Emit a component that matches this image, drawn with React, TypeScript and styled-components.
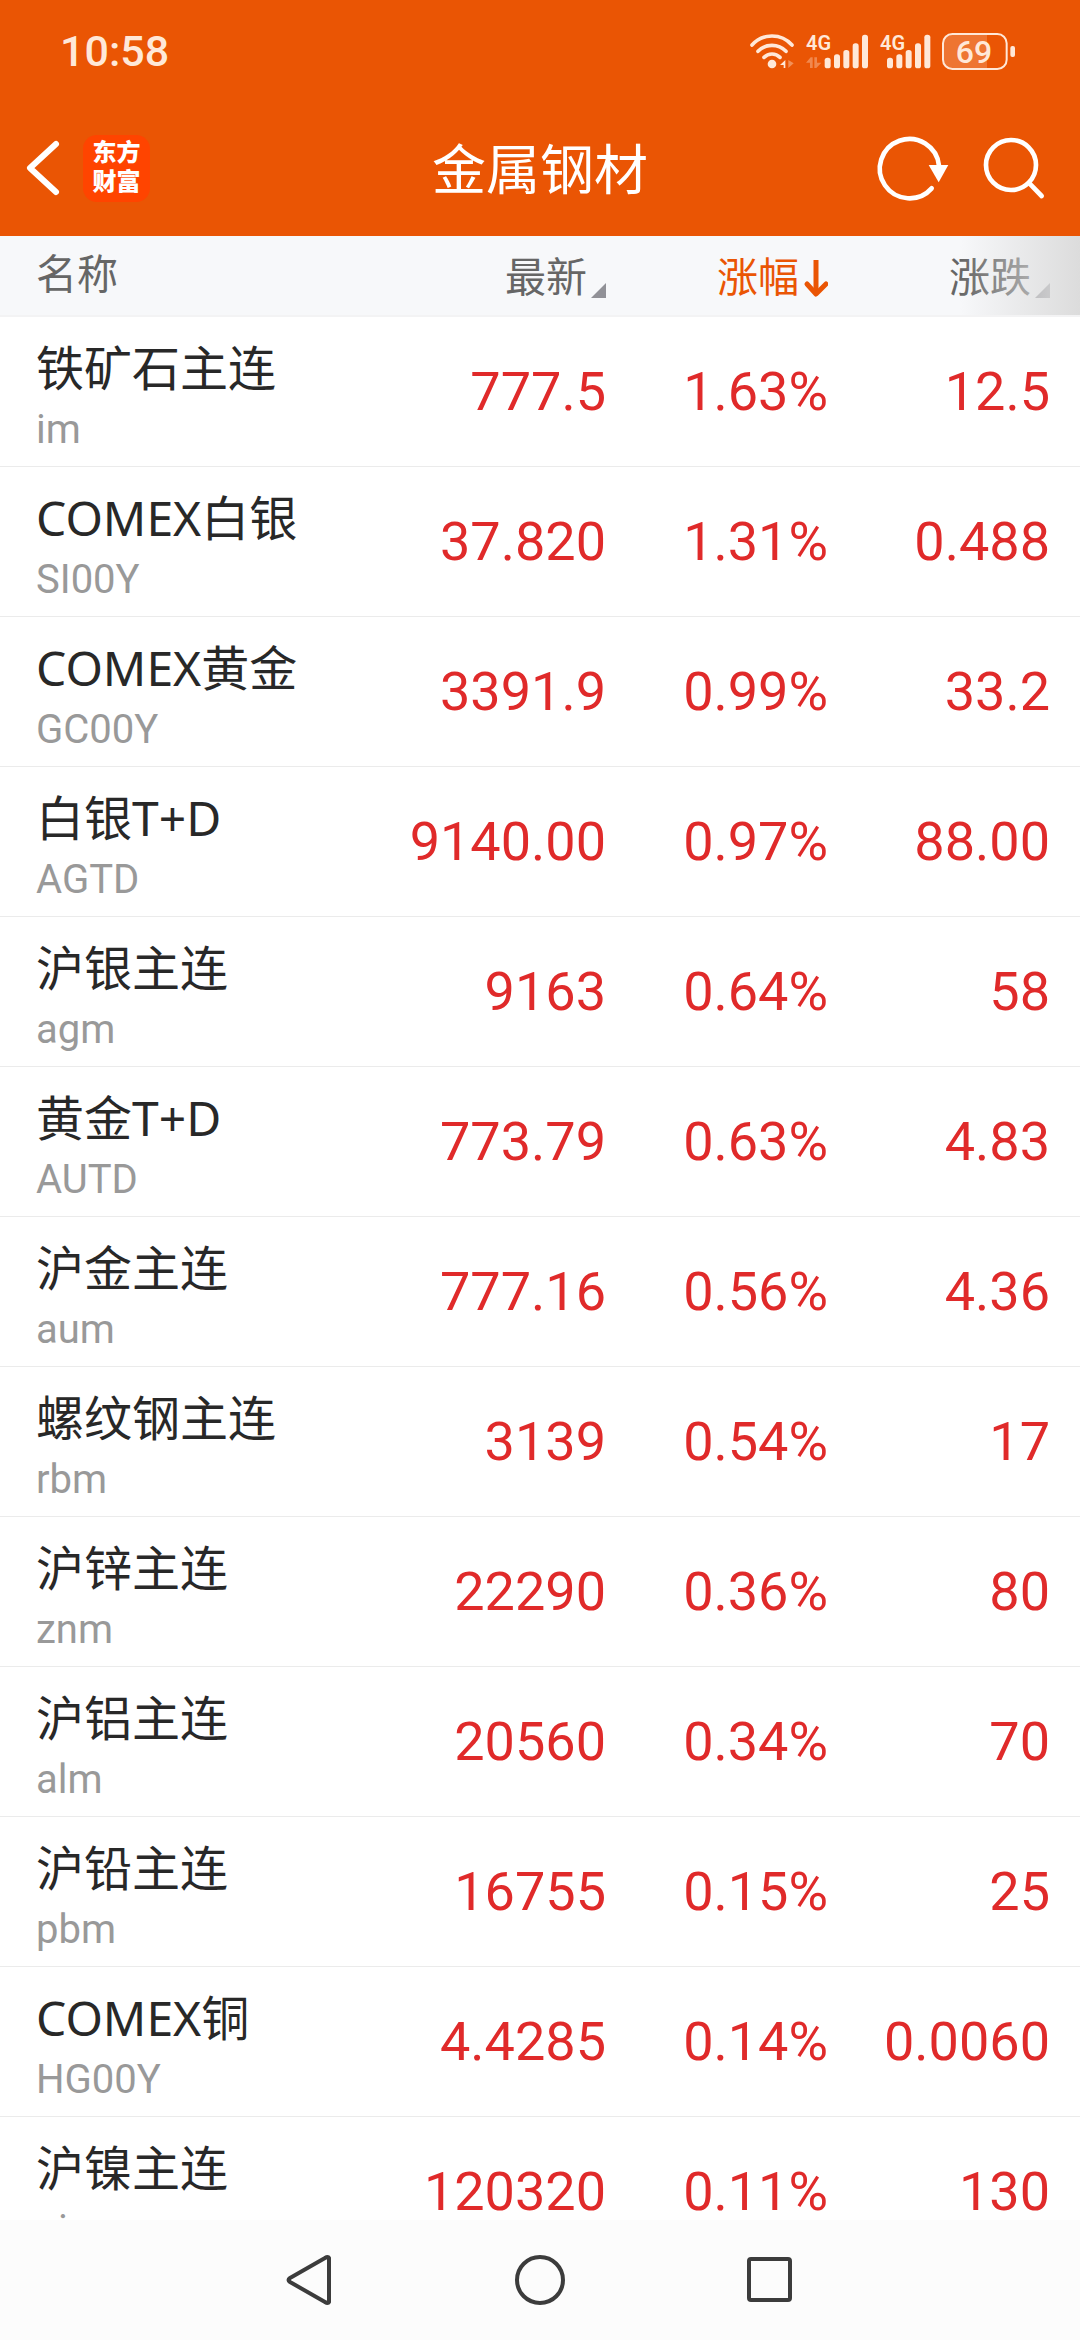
import React from "react";
import styled, { createGlobalStyle } from "styled-components";

const colors = {
  brand: "#ea5504",
  status: "#ffe8d8",
  rise: "#e02a2a",
  name: "#282828",
  code: "#999999",
  label: "#666666",
};

const GlobalStyle = createGlobalStyle`
  *, *::before, *::after { box-sizing: border-box; }
  body {
    margin: 0;
    background: #ffffff;
    font-family: Roboto, "Noto Sans CJK SC", sans-serif;
  }
  button {
    margin: 0;
    padding: 0;
    border: 0;
    background: none;
    color: inherit;
    font: inherit;
    cursor: pointer;
  }
  svg { display: block; overflow: visible; }
`;

const Screen = styled.div`
  display: flex;
  flex-direction: column;
  height: 100vh;
  overflow: hidden;
`;

const Header = styled.header`
  flex: none;
  background: ${colors.brand};
  color: #ffffff;
`;

const StatusBar = styled.div`
  display: flex;
  align-items: center;
  justify-content: space-between;
  height: 102px;
  padding: 0 64px 0 60px;
  color: ${colors.status};
`;

const Clock = styled.time`
  font-size: 43px;
  font-weight: 500;
  line-height: 52px;
`;

const StatusIcons = styled.div`
  display: flex;
  align-items: center;
  gap: 12px;
`;

const TitleBar = styled.div`
  display: grid;
  grid-template-columns: 1fr auto 1fr;
  align-items: center;
  height: 134px;
  padding: 0 24px 2px;
`;

const TitleLeft = styled.div`
  display: flex;
  align-items: center;
  gap: 20px;
`;

const TitleRight = styled.div`
  display: flex;
  align-items: center;
  justify-content: flex-end;
  gap: 34px;
  padding-right: 11px;
`;

const Title = styled.h1`
  margin: 0;
  padding-top: 8px;
  font-size: 54px;
  font-weight: 400;
  line-height: 64px;
`;

const IconButton = styled.button`
  display: flex;
  align-items: center;
  justify-content: center;
`;

const Logo = styled.a`
  display: flex;
  flex-direction: column;
  align-items: center;
  justify-content: center;
  width: 67px;
  height: 67px;
  border-radius: 14px;
  background: #ff4400;
  color: #ffffff;
  font-size: 24px;
  font-weight: 900;
  line-height: 29px;
  text-decoration: none;
`;

const ListArea = styled.main`
  flex: 1;
  min-height: 0;
  overflow: hidden;
`;

const QuoteTable = styled.table`
  width: 100%;
  border-collapse: separate;
  border-spacing: 0;
  table-layout: fixed;
`;

const ValueCol = styled.col`
  width: 222px;
`;

const LastCol = styled.col`
  width: 252px;
`;

const HeadCell = styled.th<{ $last?: boolean }>`
  position: ${(p) => (p.$last ? "relative" : "static")};
  height: 81px;
  padding: 2px ${(p) => (p.$last ? 30 : 0)}px 0 0;
  border-bottom: 2px solid #f3f3f4;
  background: #f7f8fa;
  color: ${colors.label};
  font-size: 41px;
  font-weight: 400;
  line-height: 48px;
  text-align: right;
`;

const NameHeadCell = styled(HeadCell)`
  padding: 0 0 2px 36px;
  text-align: left;
`;

const EdgeFade = styled.span`
  position: absolute;
  top: 0;
  right: 0;
  bottom: 0;
  width: 120px;
  background: linear-gradient(to right, rgba(220, 220, 220, 0), rgb(220, 220, 220));
  pointer-events: none;
`;

const SortButton = styled.button<{ $active?: boolean }>`
  display: inline-flex;
  align-items: center;
  gap: ${(p) => (p.$active ? 6 : 4)}px;
  vertical-align: middle;
  color: ${(p) => (p.$active ? colors.brand : colors.label)};
`;

const SortCorner = styled.span`
  align-self: flex-end;
  width: 15px;
  height: 15px;
  margin-bottom: 4px;
  background: #919197;
  clip-path: polygon(100% 0, 100% 100%, 0 100%);
`;

const NameCell = styled.th`
  height: 150px;
  padding: 20px 0 0 36px;
  border-bottom: 1px solid #ebebeb;
  font-weight: 400;
  text-align: left;
  white-space: nowrap;
`;

const Name = styled.div`
  color: ${colors.name};
  font-family: "Noto Sans", "Noto Sans CJK SC", sans-serif;
  font-size: 48px;
  line-height: 56px;
`;

const Code = styled.div`
  color: ${colors.code};
  font-size: 40px;
  line-height: 68px;
`;

const ValueCell = styled.td<{ $last?: boolean }>`
  padding: 0 ${(p) => (p.$last ? 30 : 0)}px 0 0;
  border-bottom: 1px solid #ebebeb;
  color: ${colors.rise};
  font-size: 54px;
  line-height: 64px;
  text-align: right;
`;

const SystemNav = styled.nav`
  display: flex;
  flex: none;
  align-items: center;
  justify-content: center;
  gap: 180px;
  height: 120px;
  background: #fcfcfc;
  color: #3c3c3c;
`;

const WifiIcon = () => (
  <svg width="44" height="35" viewBox="0 0 132 105" fill="none" aria-label="Wi-Fi">
    <g stroke="currentColor" strokeWidth="11" strokeLinecap="round">
      <path d="M6 33A80 80 0 0 1 126 33" />
      <path d="M24 52A58 58 0 0 1 108 52" />
      <path d="M42 70A34 34 0 0 1 90 70" />
    </g>
    <circle cx="66" cy="90" r="13" fill="currentColor" />
    <path d="M90 93L106 78V102H101V93Z" fill="currentColor" />
    <path d="M115 78V102L131 88Z" fill="currentColor" opacity="0.4" />
  </svg>
);

const barTops = [71, 61, 48, 28, 2];

const SignalIcon = ({ start, width, data }: { start: number; width: number; data?: boolean }) => (
  <svg width={width} height="35" viewBox={`0 0 ${width * 3} 105`} fill="currentColor" aria-label="4G">
    <text x="0" y="49" fontSize="60" fontWeight="600" fontFamily="Roboto, sans-serif">
      4G
    </text>
    {data && (
      <g opacity="0.35">
        <path d="M0 86L14 70H20V102H12V86Z" />
        <path d="M25 70H33V86H46L31 102H25Z" />
      </g>
    )}
    {barTops.map((top, i) => (
      <rect key={top} x={start + i * 28} y={top} width="18" height={103 - top} rx="8" />
    ))}
  </svg>
);

const BatteryIcon = () => (
  <svg width="74" height="37" viewBox="0 0 222 111" fill="none" aria-label="69%">
    <path d="M30 3H135V108H30A27 27 0 0 1 3 81V30A27 27 0 0 1 30 3Z" fill="currentColor" opacity="0.22" />
    <rect x="3" y="3" width="191" height="105" rx="28" stroke="currentColor" strokeWidth="6" />
    <rect x="205" y="39" width="14" height="33" rx="6" fill="currentColor" />
    <text
      x="96"
      y="90"
      fontSize="96"
      fontWeight="500"
      fontFamily="Roboto, sans-serif"
      textAnchor="middle"
      fill="currentColor"
    >
      69
    </text>
  </svg>
);

const BackIcon = () => (
  <svg width="39" height="60" viewBox="0 0 39 60" fill="none" stroke="currentColor" strokeWidth="6" strokeLinecap="round" strokeLinejoin="round">
    <path d="M32 6L6 30L32 54" />
  </svg>
);

const RefreshIcon = () => (
  <svg width="72" height="66" viewBox="0 0 216 198" fill="none">
    <path d="M164 160A89 89 0 1 1 186 92" stroke="currentColor" strokeWidth="14" strokeLinecap="round" />
    <path d="M155 90H214L185 142Z" fill="currentColor" />
  </svg>
);

const SearchIcon = () => (
  <svg width="62" height="62" viewBox="0 0 186 186" fill="none" stroke="currentColor" strokeWidth="14" strokeLinecap="round">
    <circle cx="84" cy="84" r="75" />
    <path d="M140 140L176 177" />
  </svg>
);

const SortDownIcon = () => (
  <svg width="23" height="38" viewBox="0 0 23 38" fill="none" stroke="currentColor" strokeLinejoin="round">
    <path d="M11 1V33" strokeWidth="5" />
    <path d="M2 25L11 35L21 25" strokeWidth="5" strokeLinecap="round" />
  </svg>
);

const NavBackIcon = () => (
  <svg width="50" height="50" viewBox="0 0 50 50" fill="none" stroke="currentColor" strokeWidth="4" strokeLinejoin="round">
    <path d="M44 3V47Q43 49 40 47L5 27Q2 25 5 23L40 3Q43 1 44 3Z" />
  </svg>
);

const NavHomeIcon = () => (
  <svg width="50" height="50" viewBox="0 0 50 50" fill="none" stroke="currentColor" strokeWidth="4">
    <circle cx="25" cy="25" r="23" />
  </svg>
);

const NavRecentIcon = () => (
  <svg width="50" height="50" viewBox="0 0 50 50" fill="none" stroke="currentColor" strokeWidth="4">
    <rect x="4" y="4" width="41" height="41" rx="2" />
  </svg>
);

interface Quote {
  name: string;
  code: string;
  price: string;
  percent: string;
  change: string;
}

const quotes: Quote[] = [
  { name: "铁矿石主连", code: "im", price: "777.5", percent: "1.63%", change: "12.5" },
  { name: "COMEX白银", code: "SI00Y", price: "37.820", percent: "1.31%", change: "0.488" },
  { name: "COMEX黄金", code: "GC00Y", price: "3391.9", percent: "0.99%", change: "33.2" },
  { name: "白银T+D", code: "AGTD", price: "9140.00", percent: "0.97%", change: "88.00" },
  { name: "沪银主连", code: "agm", price: "9163", percent: "0.64%", change: "58" },
  { name: "黄金T+D", code: "AUTD", price: "773.79", percent: "0.63%", change: "4.83" },
  { name: "沪金主连", code: "aum", price: "777.16", percent: "0.56%", change: "4.36" },
  { name: "螺纹钢主连", code: "rbm", price: "3139", percent: "0.54%", change: "17" },
  { name: "沪锌主连", code: "znm", price: "22290", percent: "0.36%", change: "80" },
  { name: "沪铝主连", code: "alm", price: "20560", percent: "0.34%", change: "70" },
  { name: "沪铅主连", code: "pbm", price: "16755", percent: "0.15%", change: "25" },
  { name: "COMEX铜", code: "HG00Y", price: "4.4285", percent: "0.14%", change: "0.0060" },
  { name: "沪镍主连", code: "nim", price: "120320", percent: "0.11%", change: "130" },
];

export default function App() {
  return (
    <Screen>
      <GlobalStyle />
      <Header>
        <StatusBar>
          <Clock>10:58</Clock>
          <StatusIcons>
            <WifiIcon />
            <SignalIcon start={56} width={62} data />
            <SignalIcon start={21} width={50} />
            <BatteryIcon />
          </StatusIcons>
        </StatusBar>
        <TitleBar>
          <TitleLeft>
            <IconButton aria-label="返回">
              <BackIcon />
            </IconButton>
            <Logo href="#">
              <span>东方</span>
              <span>财富</span>
            </Logo>
          </TitleLeft>
          <Title>金属钢材</Title>
          <TitleRight>
            <IconButton aria-label="刷新">
              <RefreshIcon />
            </IconButton>
            <IconButton aria-label="搜索">
              <SearchIcon />
            </IconButton>
          </TitleRight>
        </TitleBar>
      </Header>
      <ListArea>
        <QuoteTable>
          <colgroup>
            <col />
            <ValueCol />
            <ValueCol />
            <LastCol />
          </colgroup>
          <thead>
            <tr>
              <NameHeadCell scope="col">名称</NameHeadCell>
              <HeadCell scope="col">
                <SortButton>
                  最新
                  <SortCorner />
                </SortButton>
              </HeadCell>
              <HeadCell scope="col" aria-sort="descending">
                <SortButton $active>
                  涨幅
                  <SortDownIcon />
                </SortButton>
              </HeadCell>
              <HeadCell scope="col" $last>
                <SortButton>
                  涨跌
                  <SortCorner />
                </SortButton>
                <EdgeFade />
              </HeadCell>
            </tr>
          </thead>
          <tbody>
            {quotes.map((q) => (
              <tr key={q.code}>
                <NameCell scope="row">
                  <Name>{q.name}</Name>
                  <Code>{q.code}</Code>
                </NameCell>
                <ValueCell>{q.price}</ValueCell>
                <ValueCell>{q.percent}</ValueCell>
                <ValueCell $last>{q.change}</ValueCell>
              </tr>
            ))}
          </tbody>
        </QuoteTable>
      </ListArea>
      <SystemNav>
        <IconButton aria-label="返回上一页">
          <NavBackIcon />
        </IconButton>
        <IconButton aria-label="主屏幕">
          <NavHomeIcon />
        </IconButton>
        <IconButton aria-label="最近任务">
          <NavRecentIcon />
        </IconButton>
      </SystemNav>
    </Screen>
  );
}
